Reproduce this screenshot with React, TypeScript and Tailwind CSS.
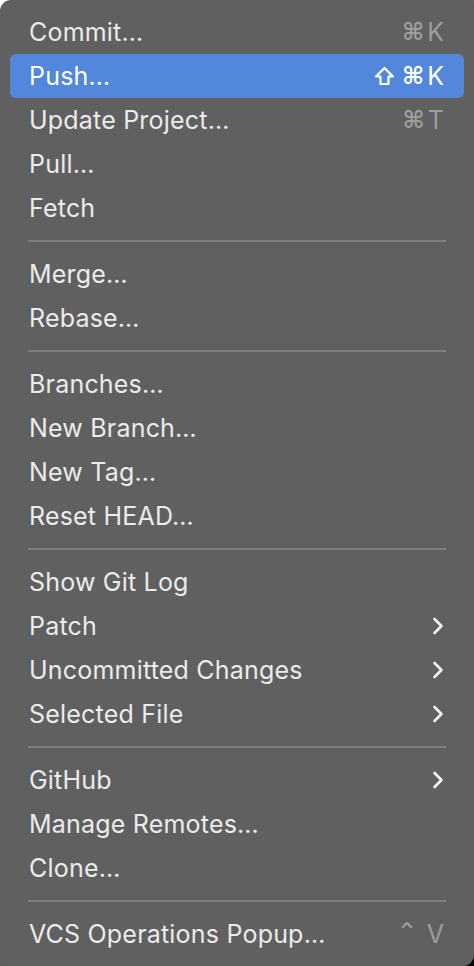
type Item = {
  label: string;
  shortcut?: string[];
  submenu?: boolean;
  active?: boolean;
};

const groups: Item[][] = [
  [
    { label: 'Commit…', shortcut: ['⌘', 'K'] },
    { label: 'Push…', shortcut: ['⇧', '⌘', 'K'], active: true },
    { label: 'Update Project…', shortcut: ['⌘', 'T'] },
    { label: 'Pull…' },
    { label: 'Fetch' },
  ],
  [{ label: 'Merge…' }, { label: 'Rebase…' }],
  [
    { label: 'Branches…' },
    { label: 'New Branch…' },
    { label: 'New Tag…' },
    { label: 'Reset HEAD…' },
  ],
  [
    { label: 'Show Git Log' },
    { label: 'Patch', submenu: true },
    { label: 'Uncommitted Changes', submenu: true },
    { label: 'Selected File', submenu: true },
  ],
  [
    { label: 'GitHub', submenu: true },
    { label: 'Manage Remotes…' },
    { label: 'Clone…' },
  ],
  [{ label: 'VCS Operations Popup…', shortcut: ['⌃', 'V'] }],
];

function Chevron() {
  return (
    <svg width="12" height="20" viewBox="0 0 12 20" className="text-[#f2f2f2]">
      <path
        d="M2.5 3 L9.5 10 L2.5 17"
        fill="none"
        stroke="currentColor"
        strokeWidth="2.6"
        strokeLinecap="round"
        strokeLinejoin="round"
      />
    </svg>
  );
}

function ShiftKey() {
  return (
    <svg width="21" height="20" viewBox="0 0 21 20" className="mr-[4px]">
      <path
        d="M10.5 2 L19 10.5 H14.5 V18 H6.5 V10.5 H2 Z"
        fill="none"
        stroke="currentColor"
        strokeWidth="2.2"
        strokeLinejoin="round"
      />
    </svg>
  );
}

function Key({ k }: { k: string }) {
  if (k === '⇧') return <ShiftKey />;
  if (k === '⌘') return <span className='font-["DejaVu_Sans"] text-[24px] font-bold'>⌘</span>;
  if (k === '⌃') return <span className='font-["DejaVu_Sans"] text-[26px] mr-[6px] mt-[-4px]'>⌃</span>;
  return <span className="text-[25px]">{k}</span>;
}

function MenuRow({ item }: { item: Item }) {
  return (
    <div
      className={
        item.active
          ? 'h-[44px] flex items-center justify-between pl-[19px] pr-[20px] rounded-[6px] bg-[#5387dc] text-white'
          : 'h-[44px] flex items-center justify-between pl-[19px] pr-[20px] text-[#ebebeb]'
      }
    >
      <span className="text-[25px] leading-none tracking-[0.2px]">{item.label}</span>
      {item.shortcut && (
        <span
          className={
            item.active
              ? 'flex items-center gap-[3px] leading-none text-white'
              : 'flex items-center gap-[3px] leading-none text-[#9d9d9d]'
          }
        >
          {item.shortcut.map((k, i) => (
            <Key key={i} k={k} />
          ))}
        </span>
      )}
      {item.submenu && <Chevron />}
    </div>
  );
}

export default function App() {
  return (
    <div className="w-[474px] h-[966px] bg-gradient-to-br from-white via-[#606060] to-black">
      <div className='w-full h-full rounded-[11px] bg-[#606060] px-[10px] py-[10px] font-["Inter","DejaVu_Sans",sans-serif] antialiased'>
        {groups.map((group, gi) => (
          <div key={gi}>
            {gi > 0 && (
              <div className="py-[10px] px-[18px]">
                <div className="h-[2px] bg-[#7e7e7e]" />
              </div>
            )}
            {group.map((item) => (
              <MenuRow key={item.label} item={item} />
            ))}
          </div>
        ))}
      </div>
    </div>
  );
}
